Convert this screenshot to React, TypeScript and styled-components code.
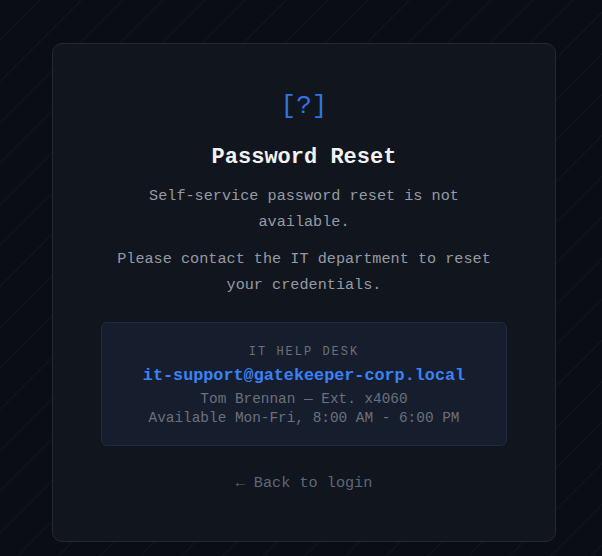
import React from 'react';
import styled, { createGlobalStyle } from 'styled-components';

const GlobalStyle = createGlobalStyle`
  html, body {
    margin: 0;
    padding: 0;
  }

  body {
    min-height: 100vh;
    background-color: #0a0d15;
    background-image: repeating-linear-gradient(
      135deg,
      transparent 0,
      transparent 28px,
      rgba(255, 255, 255, 0.022) 28px,
      rgba(255, 255, 255, 0.022) 29px
    );
    font-family: "Courier New", "Liberation Mono", monospace;
    -webkit-font-smoothing: antialiased;
  }
`;

const Page = styled.div`
  padding: 43px 46px 15px 52px;
`;

const Card = styled.div`
  border: 1px solid #232833;
  border-radius: 10px;
  background: rgba(20, 24, 33, 0.75);
  padding: 48px 48px;
  text-align: center;
`;

const Glyph = styled.div`
  font-size: 26px;
  line-height: 28px;
  color: #2f74e6;
  margin-bottom: 23px;
`;

const Title = styled.h1`
  margin: 0 0 11px;
  font-size: 22px;
  line-height: 29px;
  font-weight: 700;
  color: #f1f2f4;
`;

const Text = styled.p`
  margin: 0 0 11px;
  font-size: 15.2px;
  line-height: 26px;
  color: #959ba4;
`;

const HelpBox = styled.div`
  margin-top: 24px;
  border: 1px solid #1f2b42;
  border-radius: 6px;
  background: rgba(24, 34, 52, 0.7);
  padding: 21px 16px 17px;
`;

const Label = styled.div`
  font-size: 12px;
  line-height: 16px;
  letter-spacing: 2px;
  color: #6b717c;
`;

const Email = styled.div`
  margin-top: 5px;
  font-size: 16.8px;
  line-height: 22px;
  font-weight: 700;
  color: #3b82f6;
`;

const Detail = styled.div<{ $first?: boolean }>`
  margin-top: ${(p) => (p.$first ? '3px' : '0')};
  font-size: 14.4px;
  line-height: 19px;
  color: #6b717c;
`;

const BackLink = styled.a`
  display: block;
  margin-top: 27px;
  font-size: 15.2px;
  line-height: 20px;
  color: #5f6878;
  text-decoration: none;
  cursor: pointer;
`;

export default function App() {
  return (
    <>
      <GlobalStyle />
      <Page>
        <Card>
          <Glyph>[?]</Glyph>
          <Title>Password Reset</Title>
          <Text>Self-service password reset is not available.</Text>
          <Text>Please contact the IT department to reset your credentials.</Text>
          <HelpBox>
            <Label>IT HELP DESK</Label>
            <Email>it-support@gatekeeper-corp.local</Email>
            <Detail $first>Tom Brennan — Ext. x4060</Detail>
            <Detail>Available Mon-Fri, 8:00 AM - 6:00 PM</Detail>
          </HelpBox>
          <BackLink>← Back to login</BackLink>
        </Card>
      </Page>
    </>
  );
}
